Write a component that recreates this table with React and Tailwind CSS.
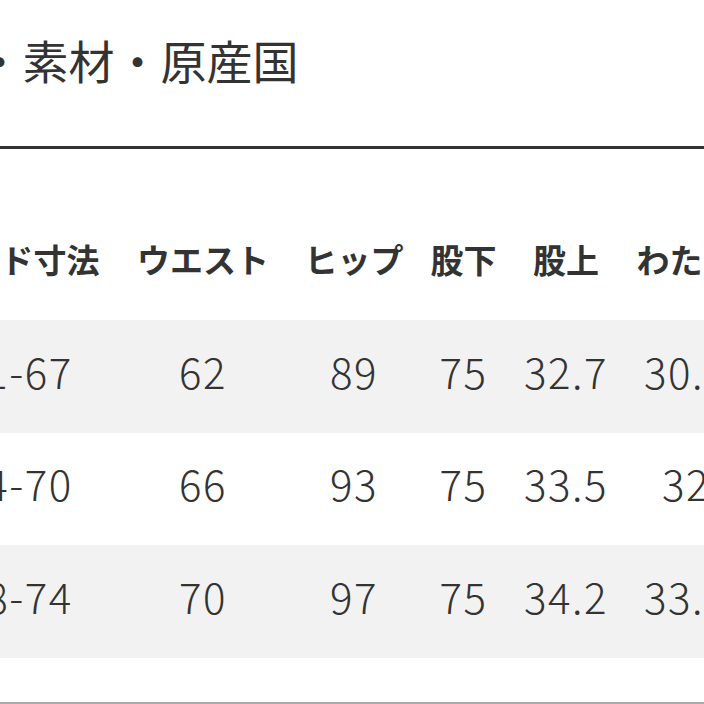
const FONT = { fontFamily: '"Noto Sans CJK JP", "Noto Sans", sans-serif' };

const headers = ["ヌード寸法", "ウエスト", "ヒップ", "股下", "股上", "わたり"];

const rows = [
  ["61-67", "62", "89", "75", "32.7", "30.5"],
  ["64-70", "66", "93", "75", "33.5", "32"],
  ["68-74", "70", "97", "75", "34.2", "33.5"],
];

const cols = "grid grid-cols-[186px_186px_116px_103px_102px_138px]";

export default function App() {
  return (
    <div className="w-[704px] h-[704px] overflow-hidden bg-white text-[#333]" style={FONT}>
      {/* title */}
      <div className="h-[146px] pt-[31px]">
        <h2 className="ml-[-160px] text-[46px] leading-[56px] whitespace-nowrap">
          サイズ・素材・原産国
        </h2>
      </div>
      <div className="h-[3px] bg-[#333]" />

      {/* size table */}
      <div className="mt-[51px] ml-[-76px]">
        <div className={`${cols} h-[120px]`}>
          {headers.map((h) => (
            <div key={h} className="flex items-center justify-center text-[33px] font-bold whitespace-nowrap pb-[1px]">
              {h}
            </div>
          ))}
        </div>

        {rows.map((r, i) => (
          <div
            key={i}
            className={`${cols} h-[112.5px] ${i % 2 === 0 ? "bg-[#f2f2f2]" : "bg-white"}`}
          >
            {r.map((v, j) => (
              <div key={j} className="flex items-center justify-center text-[42px] font-light tracking-[1.5px] whitespace-nowrap pb-[12px]">
                {v}
              </div>
            ))}
          </div>
        ))}
        <div className="h-[44px]" />
      </div>
      <div className="h-[3px] bg-[#aaa]" />
    </div>
  );
}
